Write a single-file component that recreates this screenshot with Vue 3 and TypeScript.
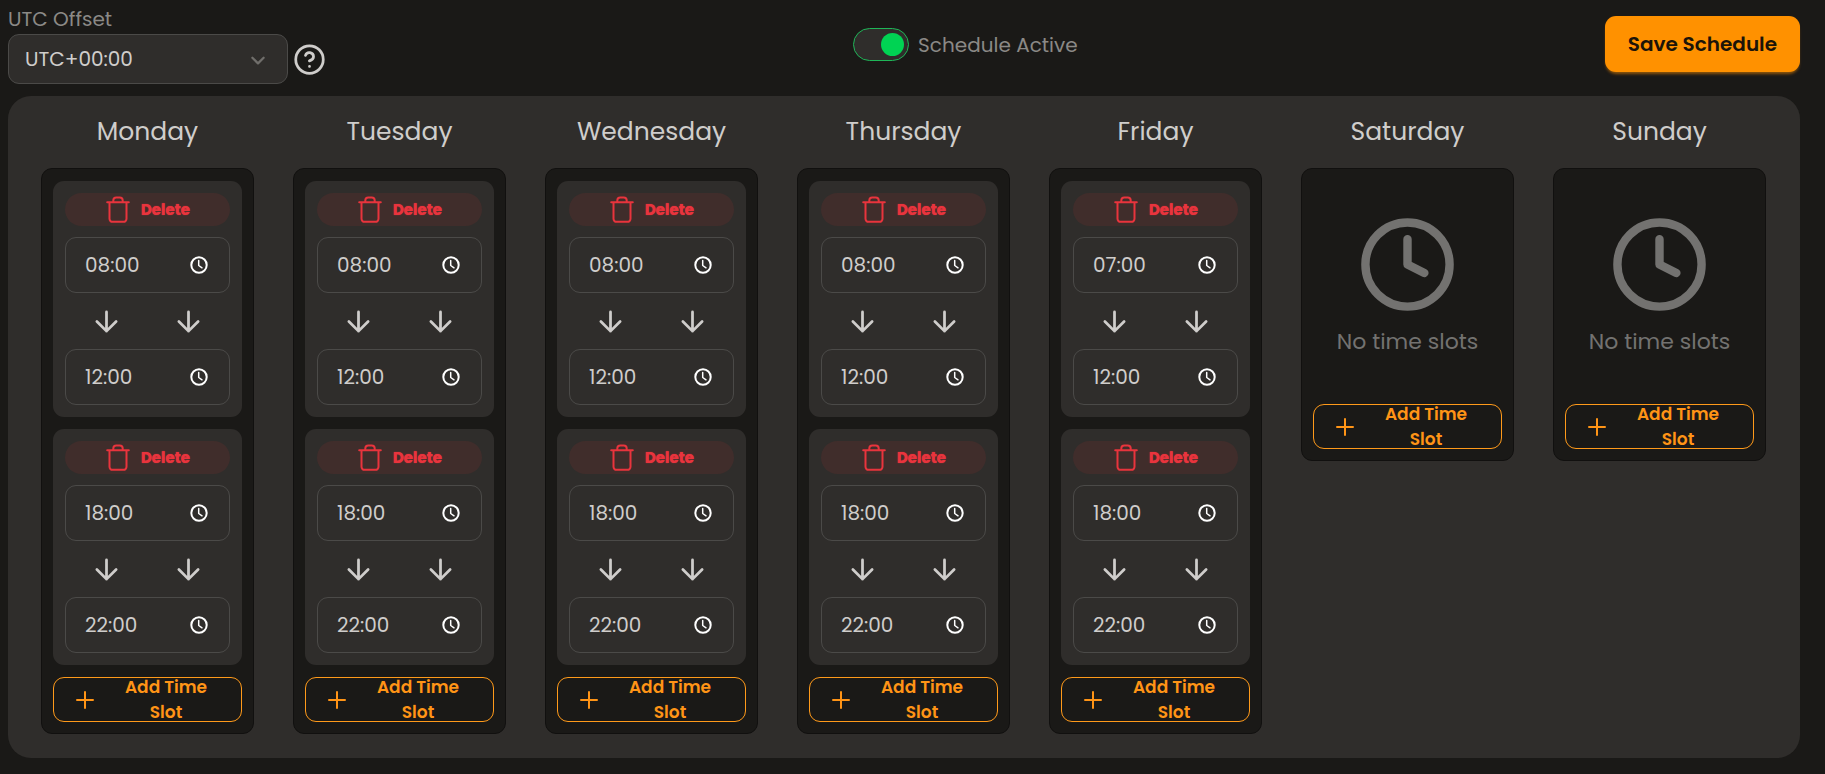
<script setup lang="ts">
import { ref } from 'vue'

interface Slot {
  id: number
  start: string
  end: string
}

interface Day {
  name: string
  slots: Slot[]
}

let nextId = 1

function makeSlot(start: string, end: string): Slot {
  return { id: nextId++, start, end }
}

const offsets: string[] = ['UTC-05:00', 'UTC+00:00', 'UTC+01:00', 'UTC+02:00']
const offset = ref('UTC+00:00')
const active = ref(true)

const days = ref<Day[]>([
  { name: 'Monday', slots: [makeSlot('08:00', '12:00'), makeSlot('18:00', '22:00')] },
  { name: 'Tuesday', slots: [makeSlot('08:00', '12:00'), makeSlot('18:00', '22:00')] },
  { name: 'Wednesday', slots: [makeSlot('08:00', '12:00'), makeSlot('18:00', '22:00')] },
  { name: 'Thursday', slots: [makeSlot('08:00', '12:00'), makeSlot('18:00', '22:00')] },
  { name: 'Friday', slots: [makeSlot('07:00', '12:00'), makeSlot('18:00', '22:00')] },
  { name: 'Saturday', slots: [] },
  { name: 'Sunday', slots: [] },
])

function addSlot(day: Day): void {
  day.slots.push(makeSlot('08:00', '12:00'))
}

function removeSlot(day: Day, id: number): void {
  day.slots = day.slots.filter((slot) => slot.id !== id)
}
</script>

<template>
  <main class="page">
    <header class="toolbar">
      <div class="offset">
        <label class="offset-label" for="utc-offset">UTC Offset</label>
        <div class="offset-row">
          <div class="select-wrap">
            <select id="utc-offset" v-model="offset" class="select">
              <option v-for="o in offsets" :key="o" :value="o">{{ o }}</option>
            </select>
            <svg class="chevron" viewBox="0 0 16 16" aria-hidden="true">
              <path d="M3 6l5 5 5-5" />
            </svg>
          </div>
          <button class="help" type="button" aria-label="About UTC offset">
            <svg viewBox="0 0 24 24" aria-hidden="true">
              <circle cx="12" cy="12" r="10" />
              <path d="M9.09 9a3 3 0 0 1 5.83 1c0 2-3 3-3 3M12 17h.01" />
            </svg>
          </button>
        </div>
      </div>

      <label class="toggle">
        <input v-model="active" class="switch" type="checkbox" role="switch" />
        <span>Schedule Active</span>
      </label>

      <button class="save" type="button">Save Schedule</button>
    </header>

    <section class="week">
      <section v-for="day in days" :key="day.name" class="day">
        <h2 class="day-name">{{ day.name }}</h2>
        <div class="day-box">
          <article v-for="slot in day.slots" :key="slot.id" class="slot">
            <button class="delete" type="button" @click="removeSlot(day, slot.id)">
              <svg viewBox="0 0 26 28" aria-hidden="true">
                <path d="M2.200 6.200h21.600M4.500 6.200v16.600a3 3 0 0 0 3 3h11a3 3 0 0 0 3-3V6.200M8.300 6V4.500a3 3 0 0 1 3-3h3.400a3 3 0 0 1 3 3V6" />
              </svg>
              Delete
            </button>
            <div class="time">
              <input v-model="slot.start" type="text" :aria-label="day.name + ' start time'" />
              <svg viewBox="0 0 18 18" aria-hidden="true">
                <circle cx="9" cy="9" r="7.700" />
                <path class="hands" d="M8.700 4.500V9.500L12 11.800" />
              </svg>
            </div>
            <div class="arrows">
              <svg v-for="n in 2" :key="n" viewBox="0 0 24 24" aria-hidden="true">
                <path d="M12 5v14M19 12l-7 7-7-7" />
              </svg>
            </div>
            <div class="time">
              <input v-model="slot.end" type="text" :aria-label="day.name + ' end time'" />
              <svg viewBox="0 0 18 18" aria-hidden="true">
                <circle cx="9" cy="9" r="7.700" />
                <path class="hands" d="M8.700 4.500V9.500L12 11.800" />
              </svg>
            </div>
          </article>

          <div v-if="day.slots.length === 0" class="empty">
            <svg viewBox="0 0 24 24" aria-hidden="true">
              <circle cx="12" cy="12" r="10" />
              <path d="M12 6v6l4 2" />
            </svg>
            <p>No time slots</p>
          </div>

          <button class="add" type="button" @click="addSlot(day)">
            <svg viewBox="0 0 18 18" aria-hidden="true">
              <path d="M9 1v16M1 9h16" />
            </svg>
            <span>Add Time Slot</span>
          </button>
        </div>
      </section>
    </section>
  </main>
</template>

<style>
html,
body {
  margin: 0;
  background: #1a1917;
}
</style>

<style scoped>
*,
*::before {
  box-sizing: border-box;
}

.page {
  padding: 8px 25px 16px 8px;
  color: #cfcdcb;
  font-family: Poppins, Inter, "Liberation Sans", sans-serif;
  font-size: 20px;
}

button,
input,
select {
  margin: 0;
  font: inherit;
  color: inherit;
}

button {
  cursor: pointer;
}

svg {
  fill: none;
  stroke: currentColor;
  stroke-linecap: round;
  stroke-linejoin: round;
  flex: none;
}

.toolbar {
  display: flex;
  align-items: flex-start;
  justify-content: space-between;
  height: 88px;
}

.offset-label {
  display: block;
  height: 26px;
  color: #8b8986;
  line-height: 22px;
}

.offset-row {
  display: flex;
  align-items: center;
  gap: 5px;
}

.select-wrap {
  position: relative;
  width: 280px;
}

.select {
  width: 100%;
  height: 50px;
  padding: 0 40px 0 16px;
  border: 1px solid #4b4a48;
  border-radius: 11px;
  background: #2f2d2b;
  appearance: none;
}

.chevron {
  position: absolute;
  top: 17px;
  right: 21px;
  width: 18px;
  height: 18px;
  color: #706e6b;
  stroke-width: 2;
  pointer-events: none;
}

.help {
  display: flex;
  padding: 0;
  border: 0;
  background: none;
}

.help svg {
  width: 33px;
  height: 33px;
  stroke-width: 2;
}

.toggle {
  display: flex;
  align-items: center;
  gap: 9px;
  padding-top: 20px;
  color: #8b8986;
}

.switch {
  display: flex;
  align-items: center;
  justify-content: flex-start;
  width: 56px;
  height: 33px;
  padding: 0 4px;
  border: 1px solid #4b4a48;
  border-radius: 17px;
  background: #2f2d2b;
  appearance: none;
}

.switch::before {
  content: "";
  width: 23px;
  height: 23px;
  border-radius: 50%;
  background: #8b8986;
}

.switch:checked {
  justify-content: flex-end;
  border-color: #1fb658;
}

.switch:checked::before {
  background: #00d353;
}

.save {
  height: 56px;
  margin-top: 8px;
  padding: 0 23px;
  border: 0;
  border-radius: 11px;
  background: #ff9100;
  box-shadow: 0 3px 3px -1px #ff910080;
  color: #1c1408;
  font-weight: 600;
}

.week {
  display: grid;
  grid-template-columns: repeat(7, minmax(0, 1fr));
  align-items: start;
  gap: 39px;
  padding: 16px 34px 24px 33px;
  border-radius: 23px;
  background: #2f2d2b;
}

.day-name {
  margin: 0 0 17px;
  font-size: 25px;
  font-weight: 400;
  line-height: 39px;
  text-align: center;
}

.day-box {
  display: flex;
  flex-direction: column;
  gap: 12px;
  padding: 12px 11px 11px;
  border: 1px solid #11100f;
  border-radius: 11px;
  background: #1a1917;
}

.slot {
  padding: 12px;
  border-radius: 11px;
  background: #2f2d2b;
}

.delete {
  display: flex;
  align-items: center;
  justify-content: center;
  gap: 10px;
  width: 100%;
  height: 33px;
  margin-bottom: 11px;
  padding: 0;
  border: 0;
  border-radius: 17px;
  background: #402d2b;
  color: #e9343d;
  font-size: 15px;
  font-weight: 700;
  text-shadow: 0 0 1px #e9343d;
}

.delete svg {
  width: 26px;
  height: 28px;
  stroke-width: 2;
}

.time {
  position: relative;
}

.time input {
  display: block;
  width: 100%;
  height: 56px;
  padding: 0 40px 0 19px;
  border: 1px solid #4b4a48;
  border-radius: 11px;
  background: none;
}

.time svg {
  position: absolute;
  top: 19px;
  right: 22px;
  width: 18px;
  height: 18px;
  color: #ffffff;
  stroke-width: 2;
}

.time .hands {
  stroke-width: 1.5;
}

.arrows {
  display: flex;
  align-items: center;
  justify-content: space-around;
  height: 56px;
}

.arrows svg {
  width: 33px;
  height: 33px;
  stroke-width: 2;
}

.empty {
  display: flex;
  flex-direction: column;
  align-items: center;
  gap: 12px;
  padding: 33px 0 35px;
  color: #737270;
}

.empty svg {
  width: 101px;
  height: 101px;
  stroke-width: 2;
}

.empty p {
  margin: 0;
  font-size: 22px;
  line-height: 30px;
}

.add {
  display: flex;
  align-items: center;
  gap: 18px;
  height: 45px;
  padding: 0 21px 0 22px;
  border: 1px solid #ff9a1a;
  border-radius: 11px;
  background: none;
  color: #ff9416;
  font-size: 17px;
  font-weight: 600;
  line-height: 25px;
}

.add svg {
  width: 18px;
  height: 18px;
  stroke-width: 2;
}

.add span {
  flex: 1;
}
</style>
